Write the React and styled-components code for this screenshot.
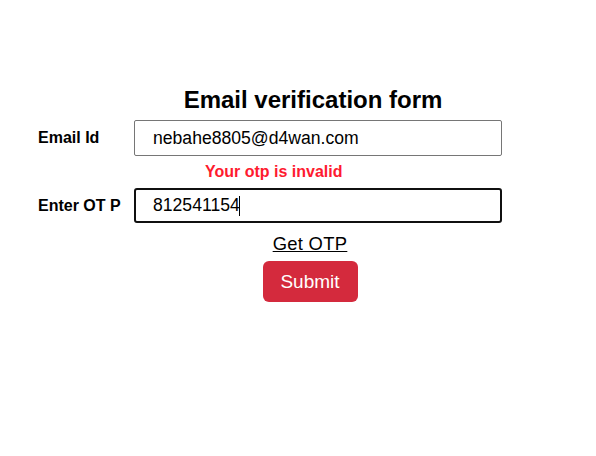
import React from "react";
import styled, { createGlobalStyle } from "styled-components";

const Global = createGlobalStyle`
  html, body { margin: 0; padding: 0; background: #fff; }
  body { margin: 8px; font-family: "Liberation Sans", Arial, sans-serif; color: #000; }
`;

const Wrapper = styled.div`
  padding-left: 30px;
  padding-top: 78px;
`;

const Title = styled.h2`
  margin: 0 0 6px;
  text-align: center;
  font-size: 24px;
  font-weight: 700;
  line-height: 28px;
`;

const FormGrid = styled.div`
  display: grid;
  grid-template-columns: 96px 368px;
  align-items: center;
`;

const Label = styled.label`
  font-size: 16px;
  font-weight: 700;
`;

const Field = styled.div`
  position: relative;
  display: flex;
`;

const Input = styled.input`
  box-sizing: border-box;
  width: 368px;
  height: ${(p) => (p.$active ? "35px" : "36px")};
  padding: 0 0 0 ${(p) => (p.$active ? "17px" : "18px")};
  font-family: "Liberation Sans", Arial, sans-serif;
  font-size: 17.6px;
  color: #000;
  border: ${(p) => (p.$active ? "2px solid #101010" : "1px solid #767676")};
  border-radius: ${(p) => (p.$active ? "3px" : "2px")};
  outline: none;
  background: #fff;
`;

const Caret = styled.span`
  position: absolute;
  left: 105px;
  top: 8px;
  width: 1px;
  height: 20px;
  background: #000;
  pointer-events: none;
`;

const ErrorText = styled.div`
  grid-column: 2;
  padding-left: 71px;
  margin: 7px 0 7px;
  color: #fe1a2f;
  font-size: 16px;
  font-weight: 700;
  line-height: 18px;
`;

const Actions = styled.div`
  display: flex;
  flex-direction: column;
  align-items: center;
  padding-right: 6px;
  margin-top: 11px;
`;

const LinkText = styled.a`
  font-size: 18.4px;
  letter-spacing: 0.3px;
  color: #000;
  text-decoration: underline;
  line-height: 20px;
  cursor: pointer;
`;

const SubmitButton = styled.button`
  margin-top: 7px;
  width: 95px;
  height: 41px;
  border: none;
  border-radius: 6px;
  background: #d42a3d;
  color: #fff;
  font-family: "Liberation Sans", Arial, sans-serif;
  font-size: 19px;
  cursor: pointer;
`;

export default function App() {
  return (
    <>
      <Global />
      <Wrapper>
        <Title>Email verification form</Title>
        <FormGrid>
          <Label htmlFor="email">Email Id</Label>
          <Field>
            <Input id="email" defaultValue="nebahe8805@d4wan.com" />
          </Field>
          <ErrorText>Your otp is invalid</ErrorText>
          <Label htmlFor="otp">Enter OT P</Label>
          <Field>
            <Input id="otp" $active defaultValue="812541154" />
            <Caret />
          </Field>
        </FormGrid>
        <Actions>
          <LinkText>Get OTP</LinkText>
          <SubmitButton>Submit</SubmitButton>
        </Actions>
      </Wrapper>
    </>
  );
}
